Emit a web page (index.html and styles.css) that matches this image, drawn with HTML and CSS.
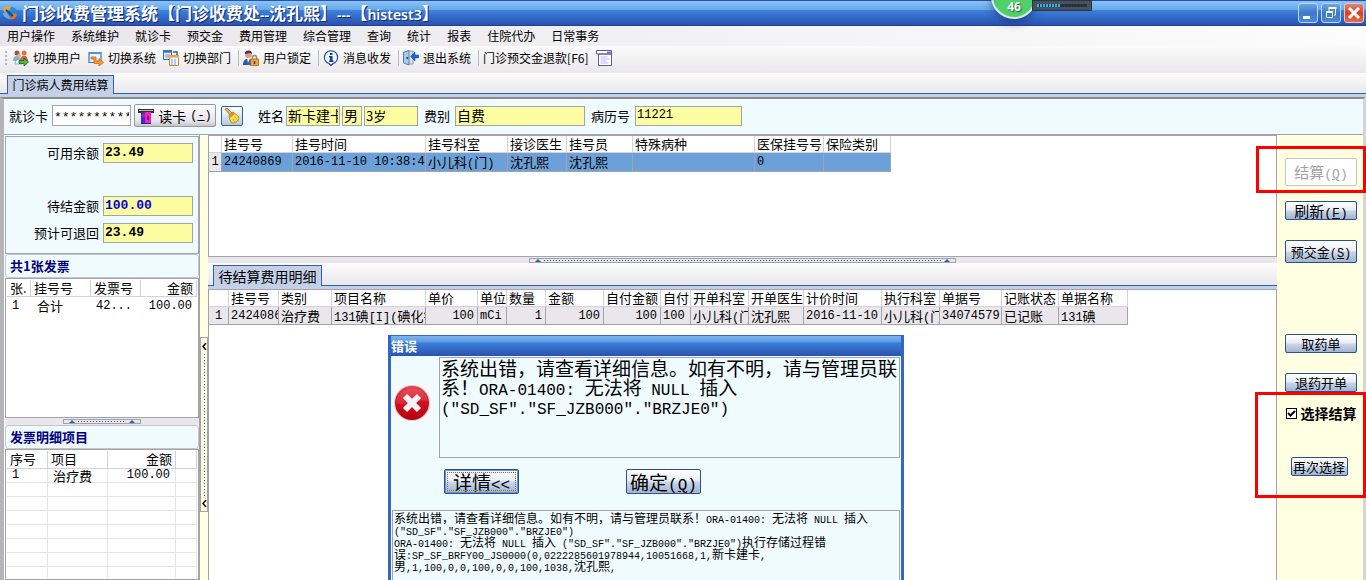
FILE: index.html
```
<!DOCTYPE html>
<html lang="zh-CN">
<head>
<meta charset="utf-8">
<title>门诊收费管理系统</title>
<link rel="stylesheet" href="styles.css">
</head>
<body>
<div class="app">
  <header class="titlebar">
    <svg class="logo" viewBox="0 0 16 16" width="16" height="16"><path d="M1 5C2 1 7 0 10 2L8 4 6 3 7 7 3 8Z" fill="#ff9a2a"/><path d="M15 10c-1 4-6 6-9 3l2-1 2 1-1-4 4-2Z" fill="#f07818"/><path d="M9 2c4 0 6 3 6 6l-3 1-4-5Z" fill="#1d8fd8"/><path d="M7 14c-4-1-6-3-6-6l4 0 3 4Z" fill="#57b7ec"/><path d="M4 5l7 6" stroke="#134a92" stroke-width="2"/></svg>
    <h1 class="title">门诊收费管理系统【门诊收费处<span class="latin">--</span>沈孔熙】<span class="latin">---</span>【<span class="latin">histest3</span>】</h1>
    <div class="window-buttons">
      <button class="win-btn" aria-label="最小化"><svg viewBox="0 0 18 18" width="18" height="18"><path d="M4 12h7v3H4z" fill="#fff"/></svg></button>
      <button class="win-btn" aria-label="还原"><svg viewBox="0 0 18 18" width="18" height="18" fill="none" stroke="#fff"><path d="M7 7V4.500h6.500V11H12"/><path d="M6.500 4h8" stroke-width="2"/><path d="M4.500 8h6v5.500h-6z"/><path d="M4 8h7" stroke-width="2"/></svg></button>
      <button class="win-btn close" aria-label="关闭"><svg viewBox="0 0 18 18" width="18" height="18"><path d="M4 4l10 10M14 4L4 14" stroke="#fff" stroke-width="3"/></svg></button>
    </div>
    <div class="monitor"><span class="monitor-value">46</span></div>
    <div class="meter"><i class="meter-track"></i></div>
  </header>

  <nav class="menubar">
    <a href="#">用户操作</a><a href="#">系统维护</a><a href="#">就诊卡</a><a href="#">预交金</a><a href="#">费用管理</a><a href="#">综合管理</a><a href="#">查询</a><a href="#">统计</a><a href="#">报表</a><a href="#">住院代办</a><a href="#">日常事务</a>
  </nav>

  <div class="toolbar">
    <span class="grip"></span>
    <button class="tool"><svg viewBox="0 0 16 16" width="16" height="16"><circle cx="4" cy="3" r="2.500" fill="#9a5a38"/><circle cx="11" cy="3" r="2.500" fill="#d8793a"/><path d="M0 11c0-7 8-7 8 0Z" fill="#78b4e4"/><path d="M7 11c0-7 8-7 8 0Z" fill="#e05a50"/><circle cx="6" cy="6" r="2" fill="#e8b078"/><path d="M2 14c0-6 7-6 7 0Z" fill="#f3f5f8" stroke="#7b8794" stroke-width=".6"/><path d="M6 10.500h5V8l4.500 4-4.500 4v-2.500H6Z" fill="#50b840" stroke="#17641b" stroke-width=".8"/></svg>切换用户</button>
    <button class="tool"><svg viewBox="0 0 16 16" width="16" height="16"><path d="M1 2.500h12v10H1z" fill="#e9f5ff" stroke="#2f78c4" stroke-width="1.200"/><path d="M1 3h12" stroke="#4a95dc" stroke-width="2"/><path d="M3 7h5v4h3V8.500l4.500 4-4.500 3.500v-2.500H6V9H3Z" fill="#ff9b28" stroke="#c45a08" stroke-width=".7"/></svg>切换系统</button>
    <button class="tool"><svg viewBox="0 0 16 16" width="16" height="16"><path d="M.5.500h8v9h-8z" fill="#eef4ff" stroke="#3c66b8"/><path d="M0 1.500h9" stroke="#3f70c8" stroke-width="2.500"/><path d="M2 5h5M2 7h5" stroke="#6d91cf"/><path d="M10 2h4v3" stroke="#2e5cb0" stroke-width="1.500" fill="none"/><path d="M6.500 5.500h9v10h-9z" fill="#fff" stroke="#c88838"/><path d="M6 6.500h10" stroke="#f2a840" stroke-width="2.500"/><path d="M8 10h2m1 0h2M8 12h2m1 0h2M8 14h2m1 0h2" stroke="#5c9be0"/></svg>切换部门</button>
    <span class="sep"></span>
    <button class="tool"><svg viewBox="0 0 16 16" width="16" height="16"><path d="M0 15c0-5 2-6 5-6s5 1 5 6Z" fill="#2a5cb4"/><path d="M4 8l1 5 2-5" fill="#fff"/><circle cx="5.500" cy="4.500" r="3.500" fill="#e3a078"/><path d="M2 4C1 0 9-1 9 4L7 3Z" fill="#4b2c54"/><path d="M9.500 9V7.500a2 2 0 0 1 4 0V9" fill="none" stroke="#888" stroke-width="1.300"/><path d="M7.500 9h8v6.500h-8z" fill="#f0a640" stroke="#a46216" stroke-width=".8"/><path d="M11.500 11v3" stroke="#5c3404" stroke-width="1.500"/></svg>用户锁定</button>
    <span class="sep"></span>
    <button class="tool"><svg viewBox="0 0 16 16" width="16" height="16"><path d="M8 .8a6.500 6.500 0 0 1 2 12.700L8 15.500l-2-2A6.500 6.500 0 0 1 8 .8Z" fill="#f8fcff" stroke="#1a4f9e" stroke-width="1.300"/><path d="M7 3h2.500v2H7zM6 6h3.500v4.500h1V12H6v-1.500h1v-3H6z" fill="#0c3f9c"/></svg>消息收发</button>
    <span class="sep"></span>
    <button class="tool"><svg viewBox="0 0 16 16" width="16" height="16"><path d="M4 1h6v13H4z" fill="#ece1c6" stroke="#8b98b4"/><path d="M.5 2.500L6 .5v14.500L.5 13Z" fill="#a5cbf2" stroke="#5080b8"/><circle cx="4.300" cy="8" r="1" fill="#334"/><path d="M15.500 5H12V2L7.500 6.500 12 11V8h3.500Z" fill="#1768d8" stroke="#0c46a2" stroke-width=".5"/></svg>退出系统</button>
    <span class="sep"></span>
    <button class="tool">门诊预交金退款[F6]</button>
    <button class="tool" aria-label="窗口"><svg viewBox="0 0 16 16" width="16" height="16"><path d="M.5.500h15V4H.500zM2.500 4h13v11.500h-13z" fill="#fff" stroke="#5c5ca8"/><path d="M11 1.500h4v2h-4z" fill="#7474bc"/><path d="M4.500 7h7M4.500 9h9M4.500 11h6M4.500 13h8" stroke="#b8b8f4"/></svg></button>
  </div>

  <div class="tabs page-tabs"><button class="tab">门诊病人费用结算</button></div>

  <main class="frame">
    <form class="patient">
      <label for="card">就诊卡</label>
      <input id="card" class="card" value="***********">
      <button type="button" class="read"><svg viewBox="0 0 16 16" width="16" height="16"><path d="M0 1h16v4H0z" fill="#333"/><path d="M1 2h14v1H1z" fill="#bbb"/><path d="M3 4h4v12H3z" fill="#2038e0"/><path d="M7 4h6v12H7z" fill="#f020c8"/><path d="M4 6h3v3H4z" fill="#f02020"/><path d="M9 8h2v4H9z" fill="#801080"/><path d="M3 15.500h10" stroke="#402060"/></svg>读卡<span class="mono">(<u>-</u>)</span></button>
      <button type="button" class="clear" aria-label="清除"><svg viewBox="0 0 18 18" width="18" height="18"><path d="M2 2l2-1 6 6-2 2Z" fill="#f4b65c" stroke="#8a5618" stroke-width=".7"/><path d="M6 8l4-3 6 5c0 4-3 6-7 6-2-2-3-5-3-8Z" fill="#ffe04a" stroke="#a27a10" stroke-width=".8"/><path d="M6 8l4-3 2 2-5 4Z" fill="#c89828"/><path d="M10 12l2 4m0-6l3 4" stroke="#b98f18" stroke-width=".7"/></svg></button>
      <label class="name-label" for="name">姓名</label>
      <input id="name" class="ro name" value="新卡建卡" readonly>
      <input class="ro sex" aria-label="性别" value="男" readonly>
      <input class="ro age" aria-label="年龄" value="3岁" readonly>
      <label class="spaced" for="feetype">费别</label>
      <input id="feetype" class="ro fee" value="自费" readonly>
      <label class="spaced" for="record">病历号</label>
      <input id="record" class="ro record mono" value="11221" readonly>
    </form>

    <div class="workspace">
      <aside class="left">
        <div class="balances">
          <label for="b1">可用余额</label><input id="b1" class="ro money" value="23.49" readonly>
          <label class="due" for="b2">待结金额</label><input id="b2" class="ro money due blue" value="100.00" readonly>
          <label for="b3">预计可退回</label><input id="b3" class="ro money" value="23.49" readonly>
        </div>
        <h2 class="group">共1张发票</h2>
        <div class="list invoices">
          <table>
            <colgroup><col class="w-24"><col class="w-60"><col class="w-50"><col class="w-56"></colgroup>
            <thead><tr><th>张.</th><th>挂号号</th><th>发票号</th><th class="r">金额</th></tr></thead>
            <tbody><tr><td class="mono">1</td><td class="in">合计</td><td class="mono">42...</td><td class="mono r">100.00</td></tr></tbody>
          </table>
        </div>
        <div class="hsplit small"><span class="handle"></span></div>
        <h2 class="group">发票明细项目</h2>
        <div class="list items">
          <table>
            <colgroup><col class="w-41"><col class="w-60"><col class="w-68"><col></colgroup>
            <thead><tr><th>序号</th><th>项目</th><th class="r">金额</th><th></th></tr></thead>
            <tbody>
              <tr><td class="mono">1</td><td>治疗费</td><td class="mono r">100.00</td><td></td></tr>
              <tr><td></td><td></td><td></td><td></td></tr><tr><td></td><td></td><td></td><td></td></tr><tr><td></td><td></td><td></td><td></td></tr><tr><td></td><td></td><td></td><td></td></tr><tr><td></td><td></td><td></td><td></td></tr><tr><td></td><td></td><td></td><td></td></tr><tr><td></td><td></td><td></td><td></td></tr>
            </tbody>
          </table>
        </div>
      </aside>

      <div class="vsplit"><span class="vhandle"><svg viewBox="0 0 5 7" width="5" height="7"><path d="M4 0L1 3.500 4 7" fill="none" stroke="#000" stroke-width="1.500"/></svg><i></i><svg viewBox="0 0 5 7" width="5" height="7"><path d="M4 0L1 3.500 4 7" fill="none" stroke="#000" stroke-width="1.500"/></svg></span></div>

      <section class="center">
        <div class="grid visits">
          <table>
            <colgroup><col class="w-13"><col class="w-71"><col class="w-133"><col class="w-82"><col class="w-59"><col class="w-66"><col class="w-122"><col class="w-69"><col class="w-67"></colgroup>
            <thead><tr><th></th><th>挂号号</th><th>挂号时间</th><th>挂号科室</th><th>接诊医生</th><th>挂号员</th><th>特殊病种</th><th>医保挂号号</th><th>保险类别</th></tr></thead>
            <tbody><tr class="selected"><td class="mono no">1</td><td class="mono">24240869</td><td class="mono">2016-11-10 10:38:40</td><td>小儿科<span class="mono">(</span>门<span class="mono">)</span></td><td>沈孔熙</td><td>沈孔熙</td><td></td><td class="mono">0</td><td></td></tr></tbody>
          </table>
        </div>
        <div class="hsplit"><span class="handle wide"></span></div>
        <div class="tabs detail-tabs"><button class="tab">待结算费用明细</button></div>
        <div class="grid fees">
          <table>
            <colgroup><col class="w-20"><col class="w-50"><col class="w-53"><col class="w-94"><col class="w-52"><col class="w-29"><col class="w-39"><col class="w-58"><col class="w-57"><col class="w-30"><col class="w-58"><col class="w-55"><col class="w-78"><col class="w-58"><col class="w-62"><col class="w-57"><col class="w-69"></colgroup>
            <thead><tr><th></th><th>挂号号</th><th>类别</th><th>项目名称</th><th>单价</th><th>单位</th><th>数量</th><th>金额</th><th>自付金额</th><th>自付</th><th>开单科室</th><th>开单医生</th><th>计价时间</th><th>执行科室</th><th>单据号</th><th>记账状态</th><th>单据名称</th></tr></thead>
            <tbody><tr><td class="mono no">1</td><td class="mono">24240869</td><td>治疗费</td><td><span class="mono">131</span>碘<span class="mono">[I](</span>碘化钠</td><td class="mono r">100</td><td class="mono">mCi</td><td class="mono r">1</td><td class="mono r">100</td><td class="mono r">100</td><td class="mono">100</td><td>小儿科<span class="mono">(</span>门)</td><td>沈孔熙</td><td class="mono">2016-11-10</td><td>小儿科<span class="mono">(</span>门)</td><td class="mono">34074579</td><td>已记账</td><td><span class="mono">131</span>碘</td></tr></tbody>
          </table>
        </div>
      </section>

      <aside class="actions">
        <button class="xp settle" disabled>结算<span class="mono">(<u>Q</u>)</span></button>
        <button class="xp refresh">刷新<span class="mono">(<u>F</u>)</span></button>
        <button class="xp deposit">预交金<span class="mono">(<u>S</u>)</span></button>
        <button class="xp medicine">取药单</button>
        <button class="xp refund">退药开单</button>
        <label class="choose"><input type="checkbox" checked>选择结算</label>
        <button class="xp again">再次选择</button>
      </aside>
    </div>
  </main>

  <div class="dialog" role="dialog" aria-labelledby="dlg-title">
    <h2 class="dialog-title" id="dlg-title">错误</h2>
    <div class="dialog-body">
      <div class="dialog-top">
        <svg class="error-icon" viewBox="0 0 38 38" width="38" height="38"><defs><linearGradient id="red" x1="0" y1="0" x2="0" y2="1"><stop offset="0" stop-color="#e8404a"/><stop offset=".5" stop-color="#d01020"/><stop offset="1" stop-color="#b8000c"/></linearGradient></defs><path d="M0 0h38v38H0z" fill="#f8f8f8"/><circle cx="19" cy="19" r="18" fill="#c9ced0"/><circle cx="19" cy="19" r="17" fill="url(#red)"/><path d="M3 19C5 0 33 0 35 17 24 14 14 24 3 19Z" fill="#fff" opacity=".1"/><path d="M12 12l14 14M26 12L12 26" stroke="#f4f4f4" stroke-width="6"/></svg>
        <div class="message">系统出错，请查看详细信息。如有不明，请与管理员联系！<span class="mono">ORA-01400: </span>无法将<span class="mono"> NULL </span>插入<br><span class="mono">("SD_SF"."SF_JZB000"."BRZJE0")</span></div>
      </div>
      <div class="dialog-buttons">
        <button class="xp focus">详情<span class="mono">&lt;&lt;</span></button>
        <button class="xp">确定<span class="mono">(<u>Q</u>)</span></button>
      </div>
      <div class="details">系统出错，请查看详细信息。如有不明，请与管理员联系！<span class="mono">ORA-01400: </span>无法将<span class="mono"> NULL </span>插入<br><span class="mono">("SD_SF"."SF_JZB000"."BRZJE0")</span><br><span class="mono">ORA-01400: </span>无法将<span class="mono"> NULL </span>插入<span class="mono"> ("SD_SF"."SF_JZB000"."BRZJE0")</span>执行存储过程错<br>误<span class="mono">:SP_SF_BRFY00_JS0000(0,0222285601978944,10051668,1,</span>新卡建卡<span class="mono">,</span><br>男<span class="mono">,1,100,0,0,100,0,0,100,1038,</span>沈孔熙<span class="mono">,</span></div>
    </div>
  </div>

  <div class="mark mark-settle"></div>
  <div class="mark mark-choose"></div>
</div>
</body>
</html>
```
FILE: styles.css
```
* { box-sizing: border-box; }

body {
  margin: 0;
  font: 13px/16px "Noto Sans CJK SC", sans-serif;
  color: #000;
}

h1, h2 { margin: 0; }
button, input { font: inherit; color: inherit; margin: 0; border-radius: 0; }
button { white-space: nowrap; padding: 0; }
svg { display: block; flex: none; }

.mono { font-family: "Liberation Mono", "Noto Sans CJK SC", monospace; font-size: 12px; }
span.mono { line-height: 0; }

.app {
  position: relative;
  display: flex;
  flex-direction: column;
  height: 100vh;
  overflow: hidden;
  background: #e9e7ec;
}

/* Title bar */
.titlebar {
  position: relative;
  display: flex;
  align-items: center;
  gap: 4px;
  height: 26px;
  flex: none;
  padding: 0 2px;
  border-top: 1px solid #2a4fb0;
  border-bottom: 1px solid #1f3f96;
  background: linear-gradient(#8cc4f4 0, #64a8ea 36%, #3c80d8 40%, #3570cc 60%, #2a52b0 100%);
}
.title {
  font-size: 17px;
  line-height: 24px;
  font-weight: 700;
  color: #fff;
  text-shadow: 1px 1px 0 #12286e;
  white-space: nowrap;
}
.title .latin { font: 600 14px/20px "Noto Sans", sans-serif; }
.window-buttons { display: flex; gap: 3px; margin-left: auto; }
.win-btn {
  width: 20px;
  height: 20px;
  border: 1px solid #b8d8fa;
  border-radius: 3px;
  background: linear-gradient(#6ba6e4, #3e78c8 50%, #4a8ad6);
}
.win-btn.close { border-color: #f0c4bc; background: linear-gradient(#d98878, #d8431c 50%, #e0704c); }
.monitor {
  position: absolute;
  top: -28px;
  right: 329px;
  width: 46px;
  height: 46px;
  border: 2px solid #dfe6e4;
  border-radius: 50%;
  background: radial-gradient(circle at 50% 60%, #4fd06c 0 55%, #2eae58 70%);
  box-shadow: 0 4px 8px #0b2a6880;
  display: flex;
  align-items: flex-end;
  justify-content: center;
}
.monitor-value {
  font: 700 12px/14px "Open Sans", sans-serif;
  color: #fff;
  padding-bottom: 3px;
  text-shadow: 1px 1px 1px #176a35;
}
.meter {
  position: absolute;
  top: -1px;
  right: 274px;
  width: 60px;
  height: 11px;
  padding: 3px 4px 0;
  border: 1px solid #2b3440;
  background: #465260;
}
.meter-track {
  display: block;
  height: 3px;
  background:
    repeating-linear-gradient(90deg, transparent 0 2px, #252c36 2px 3px),
    linear-gradient(90deg, #2ab4f0 47%, #2c343e 47%);
}

/* Menus and toolbar */
.menubar {
  display: flex;
  gap: 16px;
  height: 20px;
  flex: none;
  padding-left: 7px;
  font-size: 12px;
  line-height: 19px;
  background: linear-gradient(90deg, #e8e6eb, #fcfcfc);
}
.menubar a { color: #000; text-decoration: none; white-space: nowrap; }
.toolbar {
  display: flex;
  align-items: center;
  gap: 7px;
  height: 27px;
  flex: none;
  padding: 0 0 4px 5px;
  font-size: 12px;
  background: linear-gradient(#fbfbfb, #e9e7ea);
}
.tool {
  display: flex;
  align-items: center;
  gap: 4px;
  border: 0;
  background: none;
}
.grip {
  width: 2px;
  height: 14px;
  background: repeating-linear-gradient(#b4b2ba 0 2px, transparent 2px 4px);
}
.sep { width: 1px; height: 16px; margin-right: -3px; background: #bab8c0; }
.grip + .tool { margin-left: -1px; }

/* Tabs */
.tabs {
  display: flex;
  align-items: flex-end;
  flex: none;
  border-bottom: 3px solid #c4d0e8;
  background: linear-gradient(#fcfcfc, #e8e6ea);
  box-shadow: inset 0 -1px 0 #3160a8;
}
.tab {
  border: 1px solid #3160a8;
  border-bottom: 0;
  background: #c4d0e8;
}
.page-tabs { height: 24px; padding-left: 7px; }
.page-tabs .tab { width: 107px; height: 19px; font-size: 12px; line-height: 18px; }
.detail-tabs { height: 26px; padding-left: 5px; }
.detail-tabs .tab { width: 109px; height: 21px; font-size: 14px; line-height: 19px; }

/* Page frame */
.frame {
  display: flex;
  flex-direction: column;
  flex: 1;
  min-height: 0;
  padding-top: 1px;
  border-left: 4px solid #b5b5b9;
  border-right: 3px solid #d5d3d9;
  border-top: 2px solid #8d8b92;
  background: #fff;
}
.patient {
  display: flex;
  align-items: center;
  gap: 2px;
  height: 35px;
  flex: none;
  padding: 0 5px 3px;
  border-bottom: 1px solid #a4a2aa;
  background: #f0fbff;
  white-space: nowrap;
}
.card {
  width: 79px;
  height: 21px;
  margin-left: 2px;
  padding: 4px 1px 0;
  border: 1px solid #a4a2aa;
  background: #fff;
  font: 13px/16px "Liberation Mono", monospace;
}
.read {
  display: flex;
  align-items: center;
  justify-content: center;
  gap: 4px;
  width: 82px;
  height: 23px;
  margin: 0 3px 0 1px;
  font-size: 14px;
  border: 1px solid #98969e;
  border-radius: 2px;
  background: linear-gradient(#fff, #e4e2e8 80%, #c4c2ca);
}
.clear {
  display: flex;
  align-items: center;
  justify-content: center;
  width: 22px;
  height: 20px;
  border: 1px solid #3b5f9c;
  border-radius: 2px;
  background: linear-gradient(#fff, #b8c8e0);
}
.name-label { margin-left: 13px; }
.spaced { margin: 0 3px 0 4px; }
.ro {
  height: 20px;
  padding: 0 1px 1px;
  border: 1px solid #a4a2aa;
  background: #fcfca0;
  font-size: 14px;
}
.ro.mono { font-size: 12px; }
.name { width: 54px; }
.sex { width: 20px; }
.age { width: 54px; font-size: 13px; }
.fee { width: 130px; }
.record { width: 107px; }

.workspace { display: flex; flex: 1; min-height: 0; }

/* Left column */
.left { width: 195px; flex: none; display: flex; flex-direction: column; padding: 1px 0 0 1px; overflow: hidden; }
.balances {
  display: grid;
  grid-template-columns: 93px 90px;
  column-gap: 4px;
  row-gap: 7px;
  align-items: center;
  height: 118px;
  flex: none;
  padding: 6px 0 0;
  align-content: start;
  border: 1px solid #a4a2aa;
  background: #f0fbff;
}
.balances label { text-align: right; }
.balances .due { margin-top: 26px; }
.money { font: 700 13px/16px "Liberation Mono", monospace; }
.blue { color: #0000e0; }
.group {
  height: 24px;
  flex: none;
  padding-left: 4px;
  border: 1px solid #c6c4cc;
  border-radius: 3px;
  background: #f0fbff;
  color: #000080;
  font-size: 13px;
  line-height: 22px;
}
.list { border: 1px solid #a4a2aa; padding: 1px 1px 0; background: #fff; overflow: hidden; }
.invoices { height: 140px; flex: none; }
.items { flex: 1; min-height: 0; }
.items table { width: 100%; }

/* Tables */
table { table-layout: fixed; border-spacing: 0; width: 0; }
th, td {
  height: 18px;
  padding: 0 3px 0 2px;
  font-weight: 400;
  text-align: left;
  line-height: 16px;
  white-space: nowrap;
  overflow: hidden;
}
th {
  height: 17px;
  line-height: 13px;
  border-right: 1px solid #d4d2d8;
  border-bottom: 1px solid #d4d2d8;
  overflow: visible;
}
.r { text-align: right; }
.list th { padding: 0 3px 2px; }
.list td { padding: 0 5px; }
.list td.in { padding-left: 6px; }
.items td { height: 14px; line-height: 13px; border-right: 1px solid #e6e4ea; border-bottom: 1px solid #e6e4ea; overflow: visible; }
.items th { height: 18px; }
.grid { background: #fff; border: 1px solid #a4a2aa; border-bottom: 0; overflow: hidden; }
.grid th { padding-bottom: 2px; }
.grid td { border-right: 1px solid #a4a2aa; border-bottom: 1px solid #a4a2aa; background: #e9e7ec; }
.grid td.no, .grid .selected td.no { padding: 0; text-align: center; background: #e9e7ec; }
.grid .selected td { background: #6ca0d8; height: 19px; }
.visits { height: 122px; flex: none; border-bottom: 1px solid #a4a2aa; }
.fees { flex: 1; min-height: 0; }

.w-13 { width: 13px; } .w-20 { width: 20px; } .w-24 { width: 24px; }
.w-29 { width: 29px; } .w-30 { width: 30px; } .w-39 { width: 39px; }
.w-41 { width: 41px; } .w-50 { width: 50px; } .w-52 { width: 52px; }
.w-53 { width: 53px; } .w-55 { width: 55px; } .w-56 { width: 56px; }
.w-57 { width: 57px; } .w-58 { width: 58px; } .w-59 { width: 59px; }
.w-60 { width: 60px; } .w-62 { width: 62px; } .w-66 { width: 66px; }
.w-67 { width: 67px; } .w-68 { width: 68px; } .w-69 { width: 69px; }
.w-71 { width: 71px; } .w-78 { width: 78px; } .w-82 { width: 82px; }
.w-94 { width: 94px; } .w-122 { width: 122px; } .w-133 { width: 133px; }

/* Splitters */
.hsplit { display: flex; justify-content: center; align-items: center; height: 6px; flex: none; background: #e9e7ec; }
.handle {
  display: flex;
  align-items: center;
  justify-content: space-between;
  width: 78px;
  height: 5px;
  padding: 0 5px;
  border: 1px solid #a4a2aa;
  background: repeating-linear-gradient(90deg, #3160b8 0 1px, transparent 1px 3px) center / calc(100% - 28px) 1px no-repeat;
}
.handle.wide { width: 40%; }
.handle::before, .handle::after {
  content: "";
  border: 3px solid transparent;
  border-top: 0;
  border-bottom-color: #3160a8;
}
.hsplit.small { height: 7px; }
.vsplit { width: 9px; flex: none; padding: 202px 0 0; border-left: 1px solid #a4a2aa; background: #ffffe1; }
.vhandle {
  display: flex;
  flex-direction: column;
  align-items: center;
  width: 8px;
  height: 175px;
  padding: 5px 0 4px;
  border: 1px solid #a4a2aa;
  gap: 4px;
}
.vhandle i { flex: 1; width: 1px; background: repeating-linear-gradient(#3160b8 0 1px, transparent 1px 3px); }

.center { display: flex; flex-direction: column; flex: 1; min-width: 0; }

/* Action column */
.actions {
  display: flex;
  flex-direction: column;
  align-items: center;
  width: 86px;
  flex: none;
  padding: 23px 0 0 2px;
  background: #ffffe1;
}
.xp {
  width: 72px;
  height: 19px;
  font-size: 13px;
  line-height: 16px;
  border: 1px solid #2b508c;
  border-radius: 2px;
  background: linear-gradient(#fff 0, #e8eef6 45%, #c8d4e8 55%, #a0b4d0 100%);
}
.settle, .refresh { font-size: 15px; }
.settle .mono, .refresh .mono { font-size: 13px; }
.settle { height: 28px; border-color: #c4c4c4; background: #fff; color: #a4a4a4; }
.refresh { margin-top: 15px; }
.deposit { height: 23px; margin-top: 20px; }
.medicine { margin-top: 71px; }
.refund { margin-top: 20px; }
.choose { display: flex; align-items: center; gap: 4px; margin-top: 12px; font-weight: 700; white-space: nowrap; font-size: 14px; line-height: 18px; }
.choose input {
  appearance: none;
  width: 11px;
  height: 11px;
  flex: none;
  border: 1px solid #000;
  background: #fff;
}
.choose input:checked {
  background: url("data:image/svg+xml,%3Csvg xmlns='http://www.w3.org/2000/svg' viewBox='0 0 9 9'%3E%3Cpath d='M1 4l2.500 2.500L8 2' fill='none' stroke='%23000' stroke-width='2'/%3E%3C/svg%3E") center / 9px 9px no-repeat #fff;
}
.again { width: 57px; margin: 35px 4px 0 0; }

/* Error dialog */
.dialog {
  position: absolute;
  left: 388px;
  top: 335px;
  bottom: 0;
  width: 516px;
  display: flex;
  flex-direction: column;
  border: solid #3468c0;
  border-width: 1px 3px 0;
  background: #f0fbff;
}
.dialog-title {
  height: 20px;
  flex: none;
  color: #fff;
  font-size: 13px;
  line-height: 20px;
  background: linear-gradient(#7cb4ee 0, #5c9ce4 30%, #3c80d8 34%, #2a52b0 100%);
}
.dialog-body { display: flex; flex-direction: column; flex: 1; min-height: 0; padding: 1px 1px 0; }
.dialog-top { display: flex; align-items: flex-start; gap: 8px; }
.error-icon { margin: 27px 0 0 1px; }
.message {
  flex: 1;
  height: 101px;
  padding: 0 1px;
  border: 1px solid #a4a2aa;
  font-size: 19px;
  line-height: 19px;
}
.message .mono { font-size: 16px; white-space: pre-wrap; }
.dialog-buttons { display: flex; gap: 107px; padding: 11px 0 16px 52px; }
.dialog-buttons .xp { width: 75px; height: 25px; font-size: 19px; line-height: 20px; }
.dialog-buttons .mono { font-size: 16px; }
.focus { outline: 1px dotted #a06828; outline-offset: -4px; box-shadow: inset 0 0 0 1px #5c94dc; }
.details {
  flex: 1;
  min-height: 0;
  overflow: hidden;
  padding: 1px;
  border: 1px solid #a4a2aa;
  border-bottom: 0;
  font-size: 12px;
  line-height: 12px;
  white-space: nowrap;
}
.details .mono { font-size: 10px; white-space: pre; }

/* Call-out frames */
.mark { position: absolute; border: 3px solid #f00; pointer-events: none; }
.mark-settle { top: 146px; right: 0; width: 110px; height: 47px; }
.mark-choose { top: 392px; right: 0; width: 111px; height: 106px; }
```
